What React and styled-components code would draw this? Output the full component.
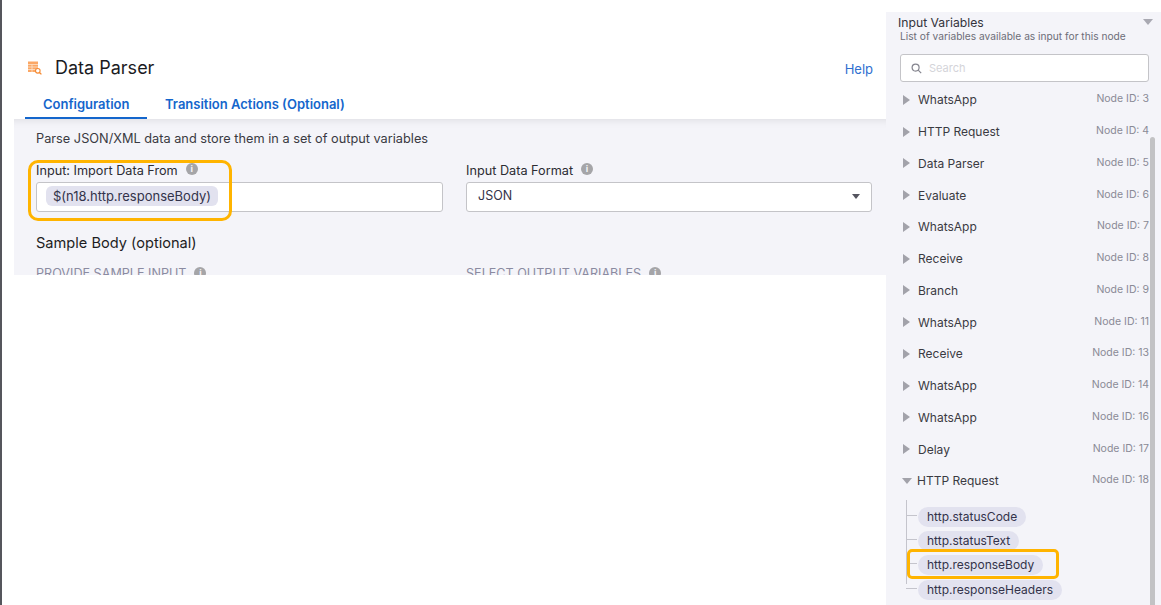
import React from "react";
import styled, { createGlobalStyle } from "styled-components";

const Global = createGlobalStyle`
  html, body { margin: 0; padding: 0; background: #fff; }
  body { font-family: Inter, "Liberation Sans", sans-serif; overflow: hidden; }
  * { box-sizing: border-box; }
`;

const Page = styled.div`
  display: flex;
  width: 1161px;
  height: 605px;
  position: relative;
  overflow: hidden;
  background: #fff;
  border-left: 2px solid #55565c;
`;

const Main = styled.main`
  width: 884px;
  display: flex;
  flex-direction: column;
`;

const Header = styled.header`
  height: 93px;
  padding: 56px 13px 0 25px;
  display: flex;
  align-items: flex-start;
`;

const Title = styled.h1`
  margin: 0 0 0 12px;
  font-size: 18px;
  line-height: 24px;
  font-weight: 400;
  color: #1b1b1f;
  flex: 1;
`;

const Help = styled.a`
  font-size: 13px;
  line-height: 18px;
  margin-top: 4px;
  color: #2f6fd0;
`;

const Tabs = styled.nav`
  height: 26px;
  margin-left: 23px;
  display: flex;
  position: relative;
  z-index: 1;
`;

const Tab = styled.div`
  height: 26px;
  padding: 3px 18px 0;
  width: ${(p) => p.$width}px;
  font-size: 13px;
  line-height: 16px;
  font-weight: 600;
  white-space: nowrap;
  color: #1466cc;
  border-bottom: ${(p) => (p.$active ? "2px solid #1466cc" : "none")};
`;

const Panel = styled.section`
  margin-left: 12px;
  height: 156px;
  padding: 11px 14px 0 22px;
  background: #f4f4f9;
  overflow: hidden;
  box-shadow: inset 0 9px 9px -8px rgba(0, 0, 0, 0.1);
`;

const Intro = styled.p`
  margin: 0 0 14px;
  font-size: 12.75px;
  line-height: 17px;
  color: #3a3a42;
`;

const Fields = styled.div`
  display: grid;
  grid-template-columns: 407px 406px;
  column-gap: 23px;
`;

const Label = styled.div`
  display: flex;
  align-items: center;
  gap: 8px;
  height: 18px;
  margin-bottom: 3px;
  font-size: 12.7px;
  color: #2c2c33;
`;

const InfoDot = styled.span`
  width: 12px;
  height: 12px;
  border-radius: 50%;
  background: #a5a5a8;
  color: #f4f4f9;
  font-size: 9px;
  line-height: 12px;
  font-weight: 700;
  text-align: center;
  margin-top: ${(p) => (p.$up ? "-2px" : "0")};
`;

const Input = styled.div`
  height: 30px;
  background: #fff;
  border: 1px solid #c4c4c8;
  border-radius: 3px;
  display: flex;
  align-items: center;
  padding: 0 9px 3px;
  position: relative;
`;

const TokenPill = styled.span`
  height: 20px;
  padding: 0 7px;
  border-radius: 6px;
  background: #e2e2ef;
  font-size: 13px;
  line-height: 20px;
  color: #33334a;
`;

const SelectValue = styled.span`
  padding-left: 2px;
  font-size: 12.5px;
  color: #33334a;
  flex: 1;
`;

const Caret = styled.span`
  width: 0;
  height: 0;
  margin-right: 2px;
  margin-top: 2px;
  border-left: 4px solid transparent;
  border-right: 4px solid transparent;
  border-top: 5px solid #55555f;
`;

const SectionTitle = styled.h2`
  margin: 21px 0 11px;
  font-size: 14.6px;
  line-height: 20px;
  font-weight: 400;
  color: #1d1d22;
`;

const CapsLabel = styled(Label)`
  color: #8b8ba1;
  font-size: 12.6px;
`;

const Sidebar = styled.aside`
  width: 275px;
  margin-top: 12px;
  background: #f4f4f9;
  padding: 3px 12px 0 12px;
  position: relative;
`;

const SideTop = styled.div`
  position: relative;
  padding-bottom: 11px;
`;

const SideTitle = styled.div`
  font-size: 12.2px;
  line-height: 15px;
  color: #33333b;
`;

const SideSub = styled.div`
  margin-left: 2px;
  font-size: 10.2px;
  line-height: 13px;
  color: #6d6d78;
`;

const Collapse = styled.span`
  position: absolute;
  right: -4px;
  top: 4px;
  border-left: 5px solid transparent;
  border-right: 5px solid transparent;
  border-top: 6px solid #a9a9b2;
`;

const Search = styled.div`
  width: 249px;
  height: 28px;
  margin-left: 2px;
  border: 1px solid #c4c4c8;
  border-radius: 3px;
  background: #fff;
  display: flex;
  align-items: center;
  gap: 7px;
  padding-left: 10px;
  font-size: 11px;
  color: #d4d4d9;
`;

const List = styled.ul`
  list-style: none;
  margin: 2px 0 0;
  padding: 0;
`;

const Row = styled.li`
  height: 31.75px;
  display: flex;
  align-items: center;
  width: 251px;
  padding-left: 5px;
`;

const RowArrow = styled.span`
  width: 0;
  height: 0;
  flex: none;
  ${(p) =>
    p.$open
      ? `border-left: 5px solid transparent; border-right: 5px solid transparent; border-top: 6px solid #a2a2aa; margin-right: 5px; margin-left: -1px;`
      : `border-top: 5px solid transparent; border-bottom: 5px solid transparent; border-left: 7px solid #a2a2aa; margin-right: 8px;`}
`;

const RowName = styled.span`
  flex: 1;
  font-size: 12px;
  color: #3a3a42;
`;

const NodeId = styled.span`
  font-size: 10.5px;
  color: #8a8a96;
  margin-top: -2px;
`;

const Tree = styled.ul`
  list-style: none;
  margin: 3px 0 0 8px;
  padding: 5px 0 0 12px;
  height: 93px;
  position: relative;
  &::before {
    content: "";
    position: absolute;
    left: 0;
    top: 0;
    height: 84px;
    border-left: 1px solid #c4c4cc;
  }
`;

const Leaf = styled.li`
  height: 24.35px;
  position: relative;
  &::before {
    content: "";
    position: absolute;
    left: -12px;
    top: 10px;
    width: 11px;
    border-top: 1px solid #c4c4cc;
  }
`;

const LeafPill = styled.span`
  display: inline-block;
  height: 20px;
  padding: 0 9px;
  border-radius: 10px;
  background: #e2e2ef;
  font-size: 12px;
  line-height: 20px;
  color: #33334a;
`;

const Scrollbar = styled.div`
  position: absolute;
  right: 6px;
  top: 125px;
  bottom: 0;
  width: 5px;
  border-radius: 3px 3px 0 0;
  background: #c2c2c4;
`;

const Highlight = styled.div`
  position: absolute;
  left: ${(p) => p.$x}px;
  top: ${(p) => p.$y}px;
  width: ${(p) => p.$w}px;
  height: ${(p) => p.$h}px;
  border: 3.5px solid #ffb400;
  border-radius: ${(p) => p.$r}px;
  pointer-events: none;
`;

const ParserIcon = () => (
  <svg width="16" height="14" viewBox="0 0 16 14" style={{ flex: "none", marginTop: 5 }}>
    <rect x="1" y="0.5" width="10" height="10.5" fill="#fba765" />
    <path d="M1 3.5h10M1 6h10M1 8.5h10M5 3.5v7.5" stroke="#fde3cd" strokeWidth="0.8" />
    <circle cx="10.8" cy="9.8" r="2.3" fill="#fff" stroke="#f58a33" strokeWidth="1.1" />
    <path d="M12.4 11.5l2 1.9" stroke="#f58a33" strokeWidth="1.3" />
  </svg>
);

const SearchIcon = () => (
  <svg width="11" height="11" viewBox="0 0 11 11" fill="none" stroke="#85858f" strokeWidth="1.2">
    <circle cx="4.6" cy="4.6" r="3.5" />
    <path d="M7.2 7.2l3 3" />
  </svg>
);

const nodes = [
  ["WhatsApp", 3], ["HTTP Request", 4], ["Data Parser", 5], ["Evaluate", 6],
  ["WhatsApp", 7], ["Receive", 8], ["Branch", 9], ["WhatsApp", 11],
  ["Receive", 13], ["WhatsApp", 14], ["WhatsApp", 16], ["Delay", 17],
];
const leaves = ["http.statusCode", "http.statusText", "http.responseBody", "http.responseHeaders"];

export default function App() {
  return (
    <>
      <Global />
      <Page>
        <Main>
          <Header>
            <ParserIcon />
            <Title>Data Parser</Title>
            <Help>Help</Help>
          </Header>
          <Tabs>
            <Tab $active $width={122}>Configuration</Tab>
            <Tab $width={230}>Transition Actions (Optional)</Tab>
          </Tabs>
          <Panel>
            <Intro>Parse JSON/XML data and store them in a set of output variables</Intro>
            <Fields>
              <div>
                <Label>Input: Import Data From <InfoDot $up>i</InfoDot></Label>
                <Input><TokenPill>$(n18.http.responseBody)</TokenPill></Input>
              </div>
              <div>
                <Label>Input Data Format <InfoDot $up>i</InfoDot></Label>
                <Input>
                  <SelectValue>JSON</SelectValue>
                  <Caret />
                </Input>
              </div>
            </Fields>
            <SectionTitle>Sample Body (optional)</SectionTitle>
            <Fields>
              <CapsLabel>PROVIDE SAMPLE INPUT <InfoDot>i</InfoDot></CapsLabel>
              <CapsLabel>SELECT OUTPUT VARIABLES <InfoDot>i</InfoDot></CapsLabel>
            </Fields>
          </Panel>
        </Main>
        <Sidebar>
          <SideTop>
            <SideTitle>Input Variables</SideTitle>
            <SideSub>List of variables available as input for this node</SideSub>
            <Collapse />
          </SideTop>
          <Search><SearchIcon />Search</Search>
          <List>
            {nodes.map(([name, id]) => (
              <Row key={id}>
                <RowArrow />
                <RowName>{name}</RowName>
                <NodeId>Node ID: {id}</NodeId>
              </Row>
            ))}
            <Row>
              <RowArrow $open />
              <RowName>HTTP Request</RowName>
              <NodeId>Node ID: 18</NodeId>
            </Row>
          </List>
          <Tree>
            {leaves.map((l) => (
              <Leaf key={l}><LeafPill>{l}</LeafPill></Leaf>
            ))}
          </Tree>
          <Scrollbar />
        </Sidebar>
        <Highlight $x={26} $y={160} $w={204} $h={61} $r={10} />
        <Highlight $x={905} $y={549} $w={152} $h={30} $r={5} />
      </Page>
    </>
  );
}
